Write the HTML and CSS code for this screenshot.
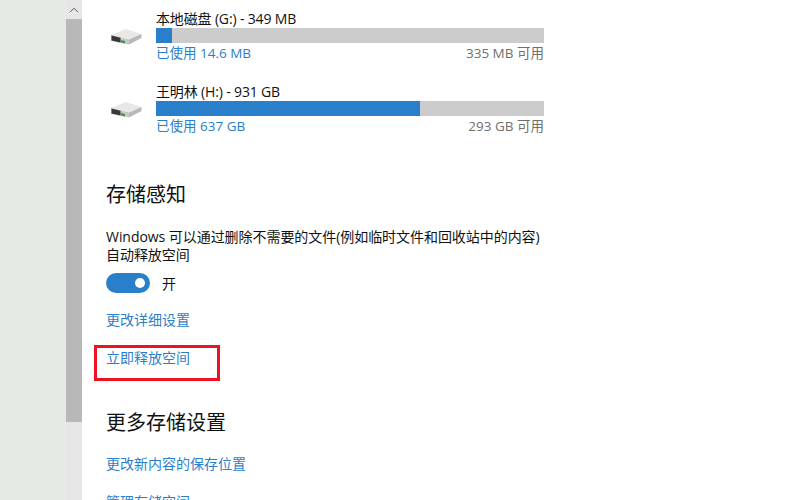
FILE: index.html
```html
<!DOCTYPE html>
<html lang="zh-CN">
<head>
<meta charset="utf-8">
<title>存储</title>
<link rel="stylesheet" href="styles.css">
</head>
<body>
<div class="desktop"></div>
<div class="scrollbar">
  <div class="arrow"><svg width="10" height="6" viewBox="0 0 10 6"><path d="M1 5.2 5 1.2 9 5.2" fill="none" stroke="#5c5c5c" stroke-width="1"/></svg></div>
  <div class="thumb"></div>
</div>
<main class="content">
  <section class="drives">
    <div class="drive">
      <svg class="hdd" viewBox="0 0 31 18" width="31" height="18"><path d="M0 7 15 1 30.500 6 18 11.500Z" fill="#e8e8e8"/><path d="M18 11.500 30.500 6V10L18 16.500Z" fill="#b8b8b8"/><path d="M0 7 18 11.500V16.500L0 13Z" fill="#c8c8c8"/><path d="M.5 7.500 9.500 9.800V14.500L.5 12.500Z" fill="#383838"/><path d="M10 12 14 13V15.500L10 14.600Z" fill="#3c9a48"/></svg>
      <div class="info">
        <div class="name">本地磁盘 (G:) - 349 MB</div>
        <div class="bar"><div class="fill" style="width:4.1%"></div></div>
        <div class="usage"><span class="used">已使用 14.6 MB</span><span class="free">335 MB 可用</span></div>
      </div>
    </div>
    <div class="drive">
      <svg class="hdd" viewBox="0 0 31 18" width="31" height="18"><path d="M0 7 15 1 30.500 6 18 11.500Z" fill="#e8e8e8"/><path d="M18 11.500 30.500 6V10L18 16.500Z" fill="#b8b8b8"/><path d="M0 7 18 11.500V16.500L0 13Z" fill="#c8c8c8"/><path d="M.5 7.500 9.500 9.800V14.500L.5 12.500Z" fill="#383838"/><path d="M10 12 14 13V15.500L10 14.600Z" fill="#3c9a48"/></svg>
      <div class="info">
        <div class="name">王明林 (H:) - 931 GB</div>
        <div class="bar"><div class="fill" style="width:68%"></div></div>
        <div class="usage"><span class="used">已使用 637 GB</span><span class="free">293 GB 可用</span></div>
      </div>
    </div>
  </section>
  <h2 class="heading first">存储感知</h2>
  <p class="desc">Windows 可以通过删除不需要的文件(例如临时文件和回收站中的内容)<br>自动释放空间</p>
  <div class="toggle-row"><span class="toggle"><span class="knob"></span></span><span class="state">开</span></div>
  <a class="link detail">更改详细设置</a>
  <div class="now-wrap"><a class="link">立即释放空间</a><span class="marker"></span></div>
  <h2 class="heading second">更多存储设置</h2>
  <a class="link save">更改新内容的保存位置</a>
  <a class="link manage">管理存储空间</a>
</main>
</body>
</html>
```
FILE: styles.css
```css
* { box-sizing: border-box; }
html, body { margin: 0; height: 100%; overflow: hidden; }
body {
  display: flex;
  width: 800px;
  height: 500px;
  background: #fff;
  font-family: "Open Sans", "Noto Sans CJK SC", sans-serif;
  font-size: 14px;
  color: #111;
}
.desktop { width: 66px; background: #e3ebe4; }
.scrollbar { width: 16px; background: #e6e6e6; display: flex; flex-direction: column; }
.arrow { height: 19px; display: flex; align-items: center; justify-content: center; }
.thumb { height: 403px; background: #b8b8b8; }
.content { flex: 1; padding: 9px 0 0 24px; overflow: hidden; height: 500px; }
.drive { display: flex; height: 73px; width: 438px; }
.hdd { margin: 19px 14px 0 5px; flex: none; }
.info { width: 388px; }
.name { height: 19px; line-height: 20px; font-size: 14px; letter-spacing: -0.15px; white-space: nowrap; }
.bar { height: 15px; background: #cccccc; }
.fill { height: 100%; background: #2a7fcb; }
.usage { display: flex; justify-content: space-between; height: 20px; line-height: 20px; font-size: 13.500px; }
.used { color: #2a7fcb; }
.free { color: #6f6f6f; }
.heading { margin: 0; font-weight: 400; font-size: 20px; line-height: 28px; color: #111; }
.first { margin-top: 26px; }
.desc { margin: 19px 0 0; line-height: 18px; font-size: 14px; letter-spacing: -0.05px; width: 450px; white-space: nowrap; }
.toggle-row { display: flex; align-items: center; height: 20px; margin-top: 9px; }
.toggle { width: 44px; height: 20px; border-radius: 10px; background: #2a7fcb; display: flex; align-items: center; justify-content: flex-end; padding-right: 5px; }
.knob { width: 10px; height: 10px; border-radius: 50%; background: #fff; }
.state { margin-left: 12px; }
.link { display: block; color: #2a7fcb; font-size: 14px; line-height: 20px; }
.detail { margin-top: 17px; }
.now-wrap { position: relative; margin-top: 18px; }
.marker { position: absolute; left: -12px; top: -3px; width: 126px; height: 36px; border: 3px solid #ee1122; }
.second { margin-top: 41px; }
.save { margin-top: 17px; }
.manage { margin-top: 18px; }
```
